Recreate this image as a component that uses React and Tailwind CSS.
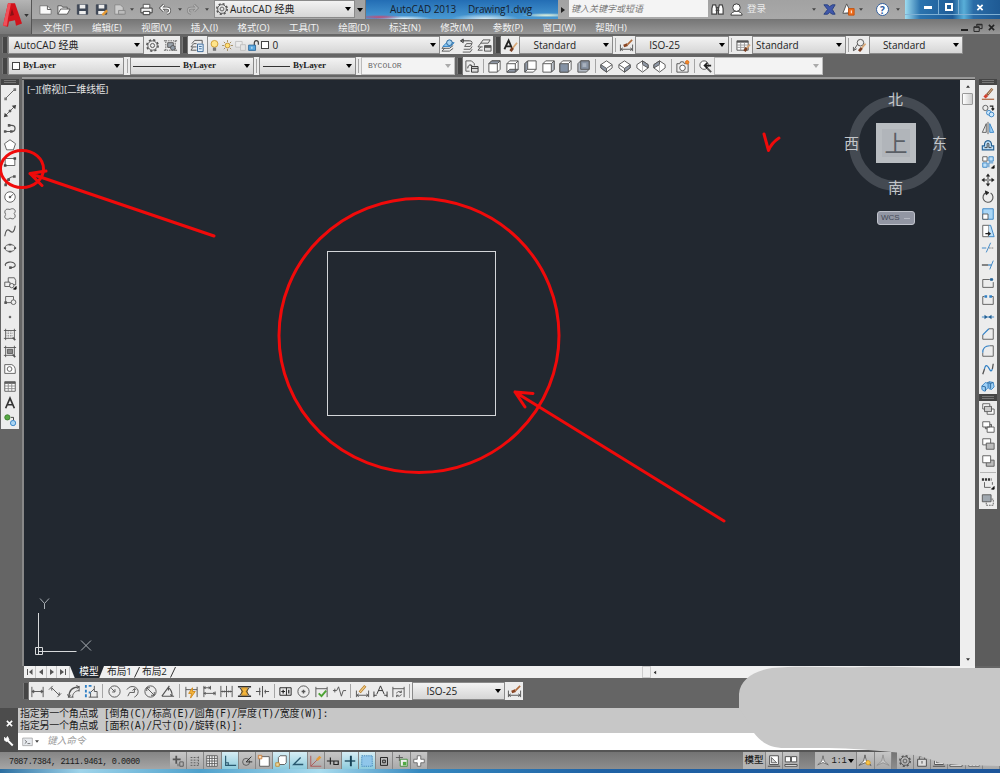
// src/App.jsx
import clsx from "clsx";

const BLUE = "#2f7fc4";

// every glyph is drawn on a 16x16 grid
const icons = {
  blank: null,
  file: <><path d="M2 4h8l4 4v5H2z" fill="#fafafa" stroke="#777" /><path d="M10 4v4h4" /></>,
  open: <><path d="M2 13V4h4l1 1.500h5V8" fill="#eee" /><path d="M2 13l3-5.500h10L12 13z" fill="#fff" /></>,
  save: <><path d="M2.500 3h11v10h-11z" fill="#3f4856" stroke="#3f4856" /><path d="M5 3h6v4H5zM4.500 9.500h7V13h-7z" fill="#eee" stroke="none" /></>,
  saveAs: <><path d="M2.500 3h11v10h-11z" fill="#3f4856" stroke="#3f4856" /><path d="M5 3h6v4H5zM4.500 9.500h7V13h-7z" fill="#eee" stroke="none" /><path d="M9 14l5-5" stroke="#e59a35" strokeWidth="2.500" /></>,
  plotPage: <><path d="M3 3h6l3 3v7H3z" fill="#ccc" stroke="#888" /><path d="M7 9h7v4H7z" fill="#bbb" stroke="#888" /></>,
  print: <><path d="M4.500 7V2.500h7V7" fill="#fff" /><path d="M2 6.500h12v5H2z" fill="#f2f2f2" stroke="#333" /><path d="M4.500 10h7v3.500h-7z" fill="#fff" stroke="#333" /></>,
  undo: <><path d="M3 6.500h6.500c4 0 4 5 0 5.500M6.500 3L3 6.500 6.500 10" stroke="#555" strokeWidth="3" /><path d="M3 6.500h6.500c4 0 4 5 0 5.500M6.500 3L3 6.500 6.500 10" stroke="#fff" strokeWidth="1.300" /></>,
  redo: <><path d="M13 6.500H6.500c-4 0-4 5 0 5.500M9.500 3L13 6.500 9.500 10" stroke="#858585" strokeWidth="3" /><path d="M13 6.500H6.500c-4 0-4 5 0 5.500M9.500 3L13 6.500 9.500 10" stroke="#b5b5b5" strokeWidth="1.300" /></>,
  gear: <><circle cx="8" cy="8" r="6" strokeWidth="1.700" strokeDasharray="2.400 2.310" /><circle cx="8" cy="8" r="5" /><circle cx="8" cy="8" r="2.200" /></>,
  wsSettings: <><path d="M3 3h10v10H3z" strokeDasharray="1.500 1" /><path d="M5 5h6v5H5z" fill="#9ba4ad" /><circle cx="10.500" cy="10.500" r="2.500" fill="#8f9aa5" /><path d="M1 3h2M13 3h2M1 13h2M13 13h2" /></>,
  layerProps: <><path d="M1 13h6M1 9.500h6M2 6l3-3.500h8V6M1 13l2-3M1 9.500L4 6h3" /><path d="M8 6.500h6v8H8z" fill="#dfeefb" stroke="#3a6896" /><path d="M9.500 9h3M9.500 11.500h3" stroke="#3a6896" /></>,
  bulb: <><circle cx="8" cy="6" r="4.200" fill="#ffe58a" stroke="#c79124" /><path d="M6 10.500h4v4H6z" fill="#777" stroke="none" /></>,
  sun: <><circle cx="8" cy="8" r="3" fill="#ffdf72" stroke="#b8842b" /><path d="M8 1.500v2M8 12.500v2M1.500 8h2M12.500 8h2M3.500 3.500l1.300 1.300M11.200 11.200l1.300 1.300M3.500 12.500l1.300-1.300M11.200 4.800l1.300-1.300" stroke="#8a6a2b" /></>,
  vpFreeze: <><path d="M2 3h8v7H2z" fill="#ececec" stroke="#bbb" /><path d="M8 7h6v7H8z" stroke="#bbb" fill="#e4e4e4" /></>,
  unlock: <><path d="M9 8V4.500c0-3.500 5-3.500 5 0V7" stroke="#444" strokeWidth="1.500" /><path d="M2 7.500h8.500v6.500H2z" fill="#58a7df" stroke="#235f92" /><path d="M6 9.500v2.500" stroke="#fff" /></>,
  layerMatch: <><path d="M1 14h8l4-3M1 11h8l4-3M1 14l3-3M1 11l3-3" stroke="#555" /><path d="M2 9l4-4h8l-4 4z" fill="#8cc7ef" stroke={BLUE} /><circle cx="9" cy="5" r="3" stroke="#235f92" fill="#a9d4f3" /></>,
  layerPrev: <><path d="M6 9l2-3h6l-2 3zM5 12h7l2-3M4 15h8l2-3" /><path d="M2 3h9c2 0 3 1 3 2M4.500 1v4L1.500 3z" stroke="#333" fill="none" /></>,
  layerState: <><path d="M1 13h5M1 9.500h5M4 5.500l2.500-3.500H14l-2 3.500zM1 9.500L4 5.500M1 13l3-3.500" /><path d="M8 8h7v6H8z" fill="#ddd" /><path d="M8 9.500h7" strokeWidth="2" /></>,
  textStyle: <><path d="M1.500 12L6 2.500l4 9.500M3.500 9h5" stroke="#222" strokeWidth="1.900" /><path d="M8 14l2.500-3.500" stroke="#7b3f22" strokeWidth="3" /><path d="M10.500 10.500L15 5" stroke="#d9a878" strokeWidth="1.800" /></>,
  dimStyle: <><path d="M1.500 7v7M14.500 7v7M2 12h12M4 10.500L2 12l2 1.500M12 10.500l2 1.500-2 1.500" /><path d="M5 8.500l4-1.500" stroke="#8a4624" strokeWidth="3" /><path d="M9 7l5-5" stroke="#b06b3b" strokeWidth="1.800" /></>,
  tableStyle: <><path d="M1 3h12v10H1z" fill="#fff" /><path d="M1 4h12" strokeWidth="2" /><path d="M1 7.500h12M1 10h12M5 5v8M9 5v8" stroke="#999" /><path d="M9 14l2.500-3.500" stroke="#7b3f22" strokeWidth="3" /><path d="M11.500 10.500L15 7" stroke="#d9a878" strokeWidth="1.800" /></>,
  leaderStyle: <><path d="M1.500 13.500L6 6.500M1.500 13.500v-4M1.500 13.500l3.500-2" /><circle cx="9" cy="5" r="3.500" /><path d="M7.500 14l3-3.500" stroke="#7b3f22" strokeWidth="3" /><path d="M10.500 10.500L14.500 6" stroke="#d9a878" strokeWidth="1.800" /></>,
  namedViews: <><path d="M2 13V2h6l3 3v2M2 13h4" /><path d="M4 10c0-4 4-5 5-2M7 6.500L9 8.500" stroke="#333" /><path d="M8 8h7v6H8z" fill="#ddd" stroke="#333" /><path d="M8 10h7" stroke="#333" /></>,
  cubeTop: <><path d="M2 5l3-3h9v9l-3 3H2z" fill="#fff" /><path d="M2 5l3-3h9l-3 3z" fill="#8f98a6" /><path d="M11 5v9" /></>,
  cubeBottom: <><path d="M2 5l3-3h9v9l-3 3H2z" fill="#fff" /><path d="M2 14l3-3h9l-3 3z" fill="#8f98a6" /><path d="M2 5h9v9M11 5l3-3" /></>,
  cubeLeft: <><path d="M2 5l3-3h9v9l-3 3H2z" fill="#fff" /><path d="M2 5l3-3v9l-3 3z" fill="#8f98a6" /><path d="M5 11h9" /></>,
  cubeRight: <><path d="M2 5l3-3h9v9l-3 3H2z" fill="#fff" /><path d="M11 5l3-3v9l-3 3z" fill="#bcc3cc" /><path d="M2 5h9" /></>,
  cubeFront: <><path d="M2 5l3-3h9v9l-3 3H2z" fill="#fff" /><path d="M2 5h9v9H2z" fill="#8492a5" /><path d="M11 5l3-3" /></>,
  cubeBack: <><path d="M2 5l3-3h9v9l-3 3H2z" fill="#b3bac4" /><path d="M5 2h9v9H5z" fill="#8792a2" /><path d="M7 4.500h4v4H7z" fill="#a9b2be" stroke="none" /></>,
  isoSW: <><path d="M8 2l6 4v3.500L8 14 2 9.500V6z" fill="#fff" /><path d="M2 6l6 4v4L2 9.500z" fill="#8f98a6" /><path d="M8 10l6-4" /></>,
  isoSE: <><path d="M8 2l6 4v3.500L8 14 2 9.500V6z" fill="#fff" /><path d="M14 6l-6 4v4l6-4.500z" fill="#8f98a6" /><path d="M8 10L2 6" /></>,
  isoNE: <><path d="M8 2l6 4v3.500L8 14 2 9.500V6z" fill="#fff" /><path d="M8 2l6 4v3.500L8 6z" fill="#8f98a6" /><path d="M8 6v8" stroke="#bbb" /></>,
  isoNW: <><path d="M8 2l6 4v3.500L8 14 2 9.500V6z" fill="#fff" /><path d="M8 2L2 6v3.500L8 6z" fill="#8f98a6" /><path d="M8 6v8" stroke="#bbb" /></>,
  camera: <><path d="M2 5h3l1-2h3l1 2h4v9H2z" fill="#eee" /><circle cx="8" cy="9.500" r="3" fill="#fff" /><circle cx="13" cy="3.500" r="1.800" fill="#f28a2c" stroke="#e0701a" /></>,
  zoomPrev: <><circle cx="6.500" cy="6.500" r="4.500" fill="#fff" /><path d="M10 10l4 4" strokeWidth="2" /><path d="M14 7H7M10 4L7 7l3 3" stroke="#222" strokeWidth="1.800" /></>,

  line: <><path d="M3 13L13 3" /><path d="M1.500 12h3v3h-3zM12 1.500h3v3h-3z" fill="#777" stroke="none" /></>,
  xline: <><path d="M2 14L14 2" /><path d="M1 15l1-5 4 4zM15 1l-1 5-4-4z" fill="#444" stroke="none" /><circle cx="8" cy="8" r="1.200" fill="#444" /></>,
  pline: <><path d="M2 12h8c5 0 5-7 0-7H7" strokeWidth="1.400" /><path d="M1 10.500h3v3H1zM8 10.500h3v3H8zM5.500 3.500h3v3h-3z" fill="#555" stroke="none" /></>,
  polygon: <path d="M8 2l6.300 4.500-2.400 7H4.100l-2.400-7z" fill="#fff" />,
  rect: <><path d="M2.500 4h11v8h-11z" fill="#fff" /><path d="M1 10.500h3v3H1zM12 2.500h3v3h-3z" fill="#444" stroke="none" /></>,
  arc: <><path d="M3 14C3 8 8 4 13 4" strokeWidth="1.400" /><path d="M1.500 12h3v3h-3zM11.500 2.500h3v3h-3zM5 6h3v3H5z" fill="#555" stroke="none" /></>,
  circle: <><circle cx="8" cy="8" r="6" fill="#fff" /><path d="M8 8l4-3.500" /><circle cx="8" cy="8" r="1" fill="#333" /></>,
  cloud: <path d="M8 3c2-2 6-1 6 2 0 1-1 2-1.500 2.500C15 9 14 14 10.500 13.500c-1 0-2-.5-2.500-1-2 2.500-6 1.500-6-1.500 0-1 .5-2 1.500-2.500C1 7 2 2 5.500 2.500c1 0 2 0 2.500.5z" />,
  spline: <path d="M2 14C3 7 5 5 8 8s5 1 6-6" strokeWidth="1.300" />,
  ellipse: <><ellipse cx="8" cy="8" rx="6" ry="4" /><path d="M6.500 4h3M6.500 12h3M1 8h2.500M12.500 8H15" strokeWidth="2" /></>,
  ellArc: <><path d="M3 9c-3-4 10-7 11-1 0 3-3 3-6 3" strokeWidth="1.300" /><path d="M7 9.500h3v3H7z" fill="#555" stroke="none" /></>,
  insert: <><path d="M6 7V2h7l1.500 3v5H10M2 7h6v5H2z" fill="#eee" /><circle cx="10" cy="11" r="2.500" fill="#eee" /><path d="M12 15h3v-3z" fill="#111" stroke="#111" /></>,
  block: <><path d="M3 4h9v7H3z" /><path d="M1.500 9.500h3v3h-3z" fill="#555" stroke="none" /><circle cx="12" cy="10.500" r="2.700" fill="#eee" /></>,
  point: <circle cx="8" cy="8" r="1" fill="#555" />,
  hatch: <><path d="M1 4h14M1 13h12M3 2v13M13 2v12" /><path d="M4 7h8M4 10h8M6 5v7M9 5v7" strokeDasharray="1 1" stroke="#888" /><path d="M11 12l3 3" strokeWidth="2" /></>,
  gradient: <><path d="M1 4h14M1 13h12M3 2v13M13 2v12" /><path d="M5 6h6v5H5z" fill="#888" /><path d="M11 12l3 3" strokeWidth="2" /></>,
  region: <><path d="M2 3h8c3 1 4 4 4 6v4H2z" fill="#fff" /><circle cx="7.500" cy="8" r="2.700" /></>,
  table: <><path d="M2 3h12v11H2z" fill="#fff" /><path d="M2 4.500h12" strokeWidth="2" /><path d="M2 8h12M2 11h12M6 5v9M10 5v9" stroke="#888" /></>,
  mtext: <path d="M3 14L8 2.500 13 14M5 10h6" stroke="#333" strokeWidth="1.900" />,
  addSel: <><circle cx="5" cy="5" r="3" fill="#57a844" stroke="#3b7f2e" /><circle cx="11.500" cy="11.500" r="3" fill="#a9d4f3" stroke={BLUE} /><path d="M9 5h3v3" stroke="#333" /></>,

  erase: <><path d="M1 14h14" stroke="#a65a32" strokeWidth="1.300" /><path d="M4 12l3-3" stroke="#d5402e" strokeWidth="3.500" /><path d="M7 9l6-7" stroke="#8a5a3b" strokeWidth="3" /><path d="M8 8l5-6" stroke="#e6cfa8" strokeWidth="1" /></>,
  copy: <><circle cx="5" cy="4.500" r="3" /><path d="M10 2.500h3.500V6M12 5l1.500 2L15 5" stroke="#222" strokeWidth="1.300" /><circle cx="9" cy="10" r="2.700" fill="#cfe7fa" stroke={BLUE} /><circle cx="12" cy="12" r="2.700" fill="#cfe7fa" stroke={BLUE} /></>,
  mirror: <><path d="M6 3v10H1.500zM8 1v14" /><path d="M10 3v10h4.500z" fill="#9fd0f5" stroke={BLUE} /></>,
  offset: <><path d="M1.500 13.500V9H4C3 1 13 1 12 9h2.500v4.500z" stroke="#235f92" strokeWidth="1.300" fill="#bfe0f8" /><path d="M4 11h3V7c0-1.500 2-1.500 2 0v4h3" stroke="#333" /></>,
  array: <><path d="M2 2h5v5H2z" fill="#fff" /><path d="M9 2h5v5H9zM2 9h5v5H2z" fill="#bfe0f8" stroke={BLUE} /><path d="M9 14V9h5" stroke={BLUE} /><path d="M12 15h3v-3z" fill="#111" stroke="#111" /></>,
  move: <><path d="M8 3v3M8 10v3M3 8h3M10 8h3" stroke="#222" /><circle cx="8" cy="8" r="1.500" /><path d="M8 .5L5.500 4h5zM8 15.500L5.500 12h5zM.5 8L4 5.500v5zM15.500 8L12 5.500v5z" fill="#222" stroke="none" /></>,
  rotate: <><path d="M6 3a5.700 5.700 0 1 0 5 .500" strokeWidth="1.300" /><path d="M5 1l4 2-3 2.500z" fill="#222" stroke="#222" /></>,
  scale: <><path d="M2 2h12v12H2z" fill="#a9d6f7" stroke={BLUE} /><path d="M2 8h6v6H2z" fill="#fff" /></>,
  stretch: <><path d="M2 1.500h7v13H2z" fill="#fff" /><path d="M9 1.500h2l4 13h-6" fill="#bfe0f8" stroke={BLUE} /><path d="M5 11h5M8 9l2.500 2L8 13" stroke="#222" strokeWidth="1.300" /></>,
  trim: <><path d="M1 8h5" stroke={BLUE} /><path d="M9 8h6" stroke="#777" strokeDasharray="2 1" /><path d="M6 13l5-11" stroke={BLUE} /></>,
  extend: <><path d="M1 8h7" stroke="#333" strokeWidth="1.300" /><path d="M8 8h4" stroke={BLUE} strokeWidth="1.300" /><path d="M10 13l4-10" stroke={BLUE} /></>,
  breakPt: <><path d="M10 4H2v9h12V7" /><path d="M10 4h4" stroke={BLUE} /><path d="M10.500 2.500h3v3h-3z" fill="#235f92" stroke="none" /></>,
  breakTwo: <><path d="M4 4H2v9h12V4h-2" /><path d="M4 2.500h3v3H4zM9.500 2.500h3v3h-3z" fill={BLUE} stroke="none" /></>,
  join: <><path d="M1 8h14" stroke={BLUE} /><path d="M7.500 8L4 5.500v5zM8.500 8L12 5.500v5z" fill="#235f92" stroke="none" /></>,
  chamfer: <><path d="M9 2h5v12H2V9" /><path d="M2 9l7-7" stroke={BLUE} strokeWidth="1.300" /></>,
  fillet: <><path d="M10 2h4v12H2v-4" /><path d="M2 10c0-5 3-8 8-8" stroke={BLUE} strokeWidth="1.300" /></>,
  blend: <><path d="M2 14l2-6M13 8l1-6" strokeWidth="1.500" /><path d="M4 8c1-5 3-5 5-1s3 4 4 1" stroke={BLUE} strokeWidth="1.300" /></>,
  explode: <><path d="M1 8l4-4 3 1v5l-4 4-3-2zM9 3l5 1 1 5-3 3-3-1z" fill="#9fd0f5" stroke={BLUE} /><path d="M1 8l4 1v5M7 4l4 1v6M11 5l3-1" stroke="#235f92" /></>,
  front: <><path d="M2 2h8v6H2zM7 8h8v6H7z" fill="#fff" /><path d="M4 5h8v6H4z" fill="#ccc" /></>,
  back: <><path d="M5 5h7v5H5z" fill="#bbb" /><path d="M2 2h8v6H2zM7 8h8v6H7z" fill="#fff" /></>,
  above: <><path d="M2 2h9v7H2z" fill="#fff" /><path d="M6 7h9v7H6z" fill="#bbb" /></>,
  under: <><path d="M6 7h9v7H6z" fill="#bbb" /><path d="M2 2h9v8H2z" fill="#fff" /></>,
  annFront: <><path d="M4 7v6h7M13 7v3" /><path d="M1 4h11" stroke="#333" strokeWidth="3" strokeDasharray="2.500 1" /><path d="M12 15h3v-3z" fill="#111" stroke="#111" /></>,
  hatchBack: <><path d="M6 7h8v7H6z" fill="#eee" strokeDasharray="2 1" /><path d="M1.500 2h10v8h-10z" fill="#a0a8b0" /></>,

  dimLin: <path d="M2 3v11M14 3v11M2 8h12M4 6.500L2 8l2 1.500zM12 6.500L14 8l-2 1.500z" />,
  dimAli: <path d="M1 6l4-4M10 14l4-4M4 4l8 8M4 4v3M12 12V9" />,
  dimArc: <><path d="M3 14C3 7 7 3 14 3" strokeWidth="1.300" /><path d="M7 14c0-4 3-7 7-7M2 14h6M14 2v6M1.500 11L3 14l2-2.500M11 1.500L14 3l-2.500 2" /></>,
  dimOrd: <><path d="M7 14V9l4-4v3h3v6M5 14h10M11 2v3" /><path d="M2 1v3M2 6v3M2 11v3M5 2h3M5 9h2" stroke={BLUE} strokeWidth="2" /></>,
  dimRad: <><circle cx="8" cy="8" r="6" /><path d="M8 8L4.500 4.500M8.500 5.500V8.500H5.500" /></>,
  dimJog: <path d="M2 6c4-6 12-3 12 2 0 3-2 5-4 6M10 5v4H5l-2 4M10 5L8 7M10 5l2 1" />,
  dimDia: <><circle cx="8" cy="8" r="6" /><path d="M4 4l8 8M4 4v3.500M4 4h3.500M12 12V8.500M12 12H8.500" /></>,
  dimAng: <path d="M2 13h13M2 13L10 2M9 4c3 2 4 5 4 9M9 4v3M13 13l-2-2" strokeWidth="1.200" />,
  dimQuick: <><path d="M2 3v11M14 3v11M2 6h12" /><path d="M9 4L5 10h3l-1 5 5-7H9z" fill="#f4b53a" stroke="#d08a1e" /></>,
  dimBase: <path d="M2 2v12M2 4h7M9 2v4M2 10h12M14 8v4M4 3L2 4l2 1M4 9l-2 1 2 1M7 3l2 1-2 1M12 9l2 1-2 1" />,
  dimCont: <path d="M2 2v12M8 2v12M14 2v12M2 8h12M4 7v2M6 7v2M10 7v2M12 7v2" />,
  dimSpace: <><path d="M1 3h14M1 13h14" stroke="#333" strokeWidth="1.500" /><path d="M5 4h6v8H5z" fill="#f4b53a" stroke="#b8842b" /><path d="M3 4l3 4-3 4M13 4l-3 4 3 4" stroke="#333" /></>,
  dimBreak: <path d="M1 8h5M10 8h5M8 2v12M5 4v8M11 6v4" strokeWidth="1.100" />,
  tolerance: <><path d="M2 4h12v8H2zM9 4v8" stroke="#222" /><path d="M3.500 8h4M5.500 6v4M11.500 6v4" stroke="#222" strokeWidth="1.300" /></>,
  center: <><circle cx="8" cy="8" r="6" /><path d="M8 6v4M6 8h4" strokeWidth="1.500" /></>,
  inspect: <><path d="M2 3v11M14 3v11M2 5h12" /><path d="M5 10l3 3 5-6" stroke="#4ba332" strokeWidth="2" /></>,
  jogLin: <path d="M1 7h4l2-4 3 10 2-6h3M3 5v4" />,
  dimEdit: <><path d="M1.500 7v7M14.500 7v7M2 12h12M4 10.500L2 12l2 1.500M12 10.500l2 1.500-2 1.500" /><path d="M5 9l6-7" stroke="#b8802f" strokeWidth="3" /><path d="M5.500 8.500l5-6" stroke="#f6d28a" strokeWidth="1.200" /></>,
  dimText: <path d="M1 8v6M15 8v6M1 12h3M12 12h3M4 11l4-9 4 9M6 7h4" stroke="#333" />,
  dimUpd: <><path d="M2 3v11M14 3v11M2 5h12" /><path d="M6 10c1-3 4-2 5-1M11 7v2H9M11 11c-1 3-4 2-5 1M6 14v-2h2" /></>,

  infer: <><path d="M6 2v9M2 6h9" strokeWidth="2" /><path d="M10 9h4v5h-4zM8 14v-3" /></>,
  snap: <path d="M3 4h8M3 7h8M3 10h8M12 3v10M3 13h10" strokeDasharray="2 1.500" />,
  grid: <><path d="M2 2h12v12H2z" fill="#fff" /><path d="M2 5h12M2 8h12M2 11h12M5 2v12M8 2v12M11 2v12" /></>,
  ortho: <path d="M3 2v11h12M3 10h3v3" stroke="#28586f" strokeWidth="1.300" />,
  polar: <><circle cx="7" cy="9" r="4" /><path d="M7 9l6-6M7 9h7" stroke="#222" /></>,
  osnap: <><path d="M3 3h11v11H3z" fill="#fff" /><path d="M1.500 1.500h4v4h-4z" fill="#f6d9b5" stroke="#c97b3b" /></>,
  osnap3d: <><path d="M5 4l2-2h7v8l-2 2H5z" fill="#fff" /><path d="M2 10h4v4H2z" stroke="#c28a2b" fill="#e8d9a5" /></>,
  otrack: <path d="M14 12H3l8-8" stroke="#28586f" strokeWidth="1.500" />,
  ducs: <><path d="M2 2v12h12M2 14l7-7" stroke="#a55" /><path d="M9 7l4-4" stroke="#e59a35" strokeWidth="3" /></>,
  dyn: <path d="M5 4v8M1 8h8M9 8h5v4H9z" stroke="#222" strokeWidth="1.300" />,
  lwt: <><path d="M9 2v12" stroke="#164257" strokeWidth="2.200" /><path d="M2 8h12" stroke="#164257" strokeWidth="1.500" /></>,
  tpy: <path d="M2 2h12v12H2z" fill="#8fc6ea" stroke="#3b82b8" strokeDasharray="1.500 1" />,
  qp: <path d="M4 4h8v9H4zM6.500 7h3v3h-3z" stroke="#222" strokeWidth="1.100" />,
  sc: <><path d="M5 1v7M1 4h8" /><path d="M6 6h8v8H6z" fill="#eee" stroke="#3b8a35" /><path d="M9 9h4v4H9z" fill="#4faa43" stroke="none" /></>,
  am: <path d="M6 2h4v4h4v4h-4v4H6v-4H2V6h4z" fill="#fff" stroke="#666" />,
  anno: <path d="M8 1l1.500 7 5.500 5-7-3-7 3 5.500-5z" fill="#fff" stroke="#555" />,
  annoSun: <><path d="M8 1l1.500 7 5.500 5-7-3-7 3 5.500-5z" fill="#fff" /><circle cx="11.500" cy="10" r="2.500" fill="#f7c54b" stroke="#d99a25" /></>,
  annoOff: <path d="M8 1l1.500 7 5.500 5-7-3-7 3 5.500-5z" fill="#c9c9c9" stroke="#909090" />,
  layout: <><path d="M3 2h10v10H3zM1 14h14" fill="#fff" stroke="#444" /><path d="M5 4l6 6H5z" fill="#ddd" /></>,
  qview: <path d="M1.500 3h6v6h-6zM8.500 3h6v6h-6zM1 12h14v2H1z" fill="#fff" stroke="#444" />,
  lock: <><path d="M5 6V3h6v3" /><path d="M3 6h10v8H3zM8 8v3" fill="#ddd" stroke="#444" /></>,
  binoc: <path d="M3 3h3l1 4v6H2V7zM10 3h3l1 4v6H9V7zM6 6h4M6 9h4" fill="#fff" stroke="#444" strokeWidth="1.300" />,
  user: <><path d="M2 14c0-3 3-3 4-4h4c1 1 4 1 4 4z" fill="#fff" stroke="#333" /><circle cx="8" cy="6" r="4" fill="#fff" stroke="#333" /></>,
  exchange: <path d="M2 3l4 5-4 5h4l2-2 3 2h3l-3-5 3-5h-3L8 5 6 3z" fill="#4057aa" stroke="#28407f" />,
  share: <><path d="M2 12L6 2l4 8M2 12h6" fill="#fff" /><path d="M8 7h6v7H8z" fill="#ee6c1c" stroke="#c35310" /><path d="M11 9v3" stroke="#fff" /></>,
  mdiRestore: <path d="M6 5V2h8.500v7H11M1.500 6H10v7.500H1.500zM6 3h8M2 7h8" stroke="#222" strokeWidth="1.500" />,
  wrench: <><path d="M13 14L6 7" stroke="#fff" strokeWidth="2.500" /><path d="M2 3v4l3 2 3-3-2-4-2 3z" fill="#fff" stroke="#fff" /></>,
  prompt: <><path d="M1 3h14v11H1z" fill="#e8ebef" stroke="#999" /><path d="M4 6l3 2.500L4 11M8 11h4" stroke="#444" /></>,
};

function Icon({ name, className = "h-4 w-4" }) {
  return (
    <svg viewBox="0 0 16 16" fill="none" stroke="#555" strokeWidth="1" className={clsx("shrink-0", className)}>
      {icons[name]}
    </svg>
  );
}

function Slot({ name, w = "w-[17.8px]" }) {
  return (
    <div className={clsx("flex shrink-0 items-center justify-center", w)}>
      <Icon name={name} className="h-[15px] w-[15px]" />
    </div>
  );
}

function Caret({ className = "text-black" }) {
  return (
    <svg viewBox="0 0 6 4" className={clsx("h-1 w-1.5 shrink-0", className)}>
      <path d="M0 0h6L3 4z" fill="currentColor" />
    </svg>
  );
}

function Combo({ w, children, off }) {
  return (
    <div
      className={clsx(
        "flex h-full shrink-0 items-center justify-between overflow-hidden border pr-[3px]",
        w,
        off ? "border-[#bbb] bg-[#f3f3f3]" : "border-[#8a8a8a] bg-linear-to-b from-[#f3f3f3] to-[#d6d6d6]",
      )}
    >
      <div className="flex items-center whitespace-nowrap">{children}</div>
      <Caret className={off ? "text-[#aaa]" : "text-black"} />
    </div>
  );
}

const Grip = () => <div className="my-px w-1.5 shrink-0 border-x border-[#777] bg-[#454545]" />;

const Sep = ({ w = "w-[6px]" }) => (
  <div className={clsx("flex shrink-0 justify-center bg-[#ececec] py-0.5", w)}>
    <div className="w-px bg-[#a5a5a5]" />
  </div>
);

const Dot = ({ className = "" }) => (
  <div className={clsx("flex w-1.5 shrink-0 items-center justify-center", className)}>
    <Caret className="h-[3px]! w-1! text-[#444]" />
  </div>
);

function TitleBar() {
  return (
    <div className="flex h-[19px] bg-linear-to-b from-[#a2a2a2] to-[#a9a9a9]">
      <div className="flex pl-1">
        {["file", "open", "save", "saveAs", "plotPage"].map((n) => (
          <Slot key={n} name={n} w="w-[18.6px]" />
        ))}
        <Dot />
        <div className="w-[3px]" />
        <Slot name="print" w="w-[18px]" />
        <Slot name="undo" w="w-[19px]" />
        <Dot className="ml-0.5" />
        <Slot name="redo" w="w-[19px]" />
        <Dot className="ml-0.5" />
      </div>
      <div className="ml-1 h-[18px]">
        <Combo w="w-[141px]">
          <Icon name="gear" className="h-3.5 w-3.5" />
          <span className="ml-px text-[10px]">AutoCAD 经典</span>
        </Combo>
      </div>
      <div className="flex w-[11px] items-center justify-center border-r border-[#777]"><Caret /></div>
      <div className="flex w-[192px] items-center bg-[radial-gradient(ellipse_at_7%_90%,#c54a72_0,#c54a7200_9%),radial-gradient(ellipse_at_20%_100%,#e9f6fb_0,#e9f6fb00_13%),radial-gradient(ellipse_at_62%_100%,#d9edf5_0,#d9edf500_20%),radial-gradient(ellipse_at_94%_80%,#e6f4dc_0,#e6f4dc00_10%),linear-gradient(#236db4,#4a9bd4)] pl-[24px] text-[10px] text-[#15202c]">
        <span className="w-[78px] whitespace-nowrap tracking-[-0.1px]">AutoCAD 2013</span>
        <span className="whitespace-nowrap tracking-[-0.2px]">Drawing1.dwg</span>
      </div>
      <div className="flex w-[11px] items-center justify-center"><Caret className="-rotate-90 text-[#222]" /></div>
      <div className="flex h-[17px] w-[139px] items-center bg-[#f4f4f4] pl-0.5 text-[9px] text-[#777] italic">键入关键字或短语</div>
      <Slot name="binoc" w="w-[19px]" />
      <Slot name="user" w="w-[19px]" />
      <div className="flex w-[65px] items-center pl-px text-[9.5px] text-[#ececec]">登录</div>
      <Dot />
      <div className="w-[3px]" />
      <Slot name="exchange" w="w-[19px]" />
      <Slot name="share" w="w-[19px]" />
      <Dot />
      <div className="flex flex-1 items-center justify-center pl-2">
        <div className="flex h-[13px] w-[13px] items-center justify-center rounded-full border border-[#345f9c] bg-white text-[10px] leading-none font-bold text-[#2b5c9f]">?</div>
        <Dot className="ml-1.5" />
      </div>
      <div className="flex w-[95px] bg-[linear-gradient(90deg,#9edcf0,#2b73ae_16%,#1f5c98_50%,#59afd8_62%,#2a6ca7_72%,#1e5a94)] text-white">
        <div className="flex h-[15px] w-[34px] items-center justify-center border-r border-b border-[#7fb0d4] pl-3"><div className="h-[3px] w-2 bg-white" /></div>
        <div className="flex h-[15px] w-[20px] items-center justify-center border-r border-b border-[#7fb0d4]"><div className="h-2 w-2 border-2 border-white" /></div>
        <div className="flex h-[15px] flex-1 items-center justify-center border-b border-[#7fb0d4]">
          <svg viewBox="0 0 8 8" className="h-[7px] w-2" stroke="#fff" strokeWidth="2"><path d="M1 1l6 6M7 1L1 7" /></svg>
        </div>
      </div>
    </div>
  );
}

const menus = ["文件(F)", "编辑(E)", "视图(V)", "插入(I)", "格式(O)", "工具(T)", "绘图(D)", "标注(N)", "修改(M)", "参数(P)", "窗口(W)", "帮助(H)"];

function MenuBar() {
  return (
    <div className="flex h-[15px] items-center gap-[19.4px] bg-linear-to-b from-[#757575] to-[#989898] pt-0.5 pl-[11px] text-[9.5px] leading-[13px] text-[#f3f3f3]">
      {menus.map((m) => (
        <div key={m} className="shrink-0 whitespace-nowrap">{m}</div>
      ))}
      <div className="ml-auto flex items-center gap-[5px] pr-[5px]">
        <div className="mt-1 h-0.5 w-[7px] bg-[#222]" />
        <Icon name="mdiRestore" className="h-2.5 w-2.5" />
        <svg viewBox="0 0 8 8" className="h-[7px] w-[7px]" stroke="#222" strokeWidth="1.800"><path d="M1 1l6 6M7 1L1 7" /></svg>
      </div>
    </div>
  );
}

function StandardRow() {
  return (
    <div className="flex h-[22px] bg-[#656565] py-0.5 pl-0.5 text-[10px] text-[#222]">
      <Grip />
      <Combo w="w-[136px]"><span className="pl-[5px]">AutoCAD 经典</span></Combo>
      <div className="flex bg-[#ececec]"><Slot name="gear" /><Slot name="wsSettings" /></div>
      <div className="w-[2px]" />
      <Grip />
      <div className="flex bg-[#ececec]"><Slot name="layerProps" w="w-[19px]" /></div>
      <Combo w="w-[233px]">
        {["bulb", "sun", "vpFreeze", "unlock"].map((n) => (
          <Icon key={n} name={n} className="h-[13px] w-[13px]" />
        ))}
        <div className="ml-px h-2 w-2 border border-[#444] bg-white" />
        <span className="ml-1">0</span>
      </Combo>
      <div className="flex bg-[#ececec]"><Slot name="layerMatch" /><Slot name="layerPrev" /><Slot name="layerState" /></div>
      <div className="w-0.5" />
      <Grip />
      <div className="flex bg-[#ececec]"><Slot name="textStyle" w="w-[18.5px]" /></div>
      <Combo w="w-[94px]"><span className="pl-[13px]">Standard</span></Combo>
      <Sep w="w-[4px]" />
      <div className="flex bg-[#ececec]"><Slot name="dimStyle" /></div>
      <Combo w="w-[94px]"><span className="pl-[13px]">ISO-25</span></Combo>
      <Sep w="w-[5px]" />
      <div className="flex bg-[#ececec]"><Slot name="tableStyle" /></div>
      <Combo w="w-[94px]"><span className="pl-[3px]">Standard</span></Combo>
      <Sep w="w-[5px]" />
      <div className="flex bg-[#ececec]"><Slot name="leaderStyle" /></div>
      <Combo w="w-[94px]"><span className="pl-[13px]">Standard</span></Combo>
    </div>
  );
}

function PropertiesRow() {
  return (
    <div className="flex h-[21px] bg-[#656565] pt-px pb-0.5 pl-0.5 font-['Liberation_Serif','Noto_Sans_CJK_SC',serif] text-[9px] font-bold text-[#222]">
      <Grip />
      <Combo w="w-[116px]">
        <div className="ml-[3px] h-2 w-2 border border-[#444] bg-white" />
        <span className="ml-[3px] tracking-[-0.1px]">ByLayer</span>
      </Combo>
      <Sep />
      <Combo w="w-[124px]">
        <div className="ml-0.5 h-px w-[47px] bg-[#333]" />
        <span className="ml-[3px] tracking-[-0.1px]">ByLayer</span>
      </Combo>
      <Sep w="w-[5px]" />
      <Combo w="w-[97px]">
        <div className="ml-[3px] h-px w-[27px] bg-[#333]" />
        <span className="ml-[3px] tracking-[-0.1px]">ByLayer</span>
      </Combo>
      <Sep w="w-[5px]" />
      <Combo w="w-[94px]" off>
        <span className="pl-1.5 font-['Liberation_Mono',monospace] text-[8px] font-normal text-[#666]">BYCOLOR</span>
      </Combo>
      <div className="w-0.5" />
      <Grip />
      <div className="flex bg-[#ececec]">
        <Slot name="namedViews" />
        <Sep w="w-[5px]" />
        {["cubeTop", "cubeBottom", "cubeLeft", "cubeRight", "cubeFront", "cubeBack"].map((n) => (
          <Slot key={n} name={n} />
        ))}
        <Sep w="w-[5px]" />
        {["isoSW", "isoSE", "isoNE", "isoNW"].map((n) => (
          <Slot key={n} name={n} />
        ))}
        <Sep w="w-[5px]" />
        <Slot name="camera" />
        <Sep w="w-[5px]" />
        <Slot name="zoomPrev" />
      </div>
      <Combo w="w-[109px]" off />
    </div>
  );
}

function VerticalBar({ items }) {
  return (
    <div className="flex w-[18px] flex-col bg-[#ececec]">
      <div className="flex h-[6.500px] flex-col justify-center gap-px bg-[#454545] px-[3px]">
        <div className="h-px bg-[#777]" />
        <div className="h-px bg-[#777]" />
      </div>
      {items.map((n) =>
        n === "|" ? (
          <div key={n} className="mx-px my-[2px] h-px bg-[#b5b5b5]" />
        ) : (
          <div key={n} className="flex h-[17.2px] items-center justify-center">
            <Icon name={n} className="h-[14px] w-[14px]" />
          </div>
        ),
      )}
    </div>
  );
}

const drawTools = ["line", "xline", "pline", "polygon", "rect", "arc", "circle", "cloud", "spline", "ellipse", "ellArc", "insert", "block", "point", "hatch", "gradient", "region", "table", "mtext", "addSel"];
const modifyTools = ["erase", "copy", "mirror", "offset", "array", "move", "rotate", "scale", "stretch", "trim", "extend", "breakPt", "breakTwo", "join", "chamfer", "fillet", "blend", "explode"];
const orderTools = ["front", "back", "above", "under", "|", "annFront", "hatchBack"];

// view cube, UCS icon and the drawn rectangle sit freely on the model space
function Canvas() {
  return (
    <div className="relative flex-1 overflow-hidden bg-[#222830] text-[#c3c6ca]">
      <div className="absolute top-[3px] left-[3px] text-[9.7px] leading-[13px] tracking-[-0.1px] text-[#e5e5e5]">[−][俯视][二维线框]</div>
      <div className="absolute top-[171px] left-[303px] h-[165px] w-[169px] border border-[#d4d6d9]" />

      <div className="absolute top-[16px] left-[825px] h-[95px] w-[95px] rounded-full border-[10px] border-[#444a52]" />
      <div className="absolute top-[43px] left-[852px] flex h-[40px] w-[40px] items-center justify-center bg-[#b9bdc1]">
        <div className="flex h-[28px] w-[28px] items-center justify-center bg-[#b1b5ba] text-[23px] leading-none text-[#5a5f66]">上</div>
      </div>
      <span className="absolute top-[11px] left-[864px] text-[15px] leading-[16px]">北</span>
      <span className="absolute top-[99px] left-[864px] text-[15px] leading-[16px]">南</span>
      <span className="absolute top-[55px] left-[820px] text-[15px] leading-[16px]">西</span>
      <span className="absolute top-[55px] left-[908px] text-[15px] leading-[16px]">东</span>
      <div className="absolute top-[131px] left-[853px] flex h-[14px] w-[38px] items-center gap-1 rounded-[3px] border border-[#c0c3cc] bg-[#9296a3] pl-[3px] font-['Liberation_Sans',sans-serif] text-[8px] text-[#444a58]">
        WCS<span className="h-px w-1.5 bg-[#b5b8c2]" />
      </div>

      <svg viewBox="0 0 70 60" fill="none" stroke="#d6d8da" strokeWidth="1" className="absolute top-[516px] left-[10px] h-[60px] w-[70px]">
        <path d="M4.500 17v42M1.500 51.500h7v7h-7zM4.500 55.500h38" />
        <path d="M6 2.500l4.500 5 4.500-5M10.500 7.500V13M47 44.500l10 10M57 44.500l-10 10" stroke="#aab0b5" />
      </svg>
    </div>
  );
}

function ScrollBar() {
  return (
    <div className="flex w-[15px] flex-col items-center justify-between bg-[#eeeeee]">
      <div className="flex w-full flex-col items-center">
        <div className="flex h-[13px] items-center"><Caret className="h-[3px]! w-1! rotate-180 text-[#333]" /></div>
        <div className="h-[12px] w-[11px] rounded-[1px] border border-[#999] bg-linear-to-r from-white to-[#ccc]" />
      </div>
      <div className="flex h-[14px] items-center"><Caret className="h-[3px]! w-1! text-[#333]" /></div>
    </div>
  );
}

const TabEdge = ({ className }) => (
  <svg viewBox="0 0 6 12" className={clsx("h-3 w-1.5 shrink-0", className)} stroke="#333" strokeWidth="1">
    <path d="M5.500 1L.5 11.500" />
  </svg>
);

function SheetTabs() {
  return (
    <div className="ml-[24px] flex h-[12px] w-[951px] bg-[#f0f0f0] text-[9.7px] leading-[12px] text-[#222]">
      <svg viewBox="0 0 46 12" className="h-3 w-[46px] shrink-0" fill="#555" stroke="#999" strokeWidth=".5">
        <path d="M11.500 0v12M22.500 0v12M32.500 0v12M45.500 0v12" />
        <path d="M4 3v6h-1V3zM8.500 3v6L5 6zM19 3v6l-4-3zM26 3v6l4-3zM36 3v6l4-3zM41 3v6h1V3z" stroke="none" />
      </svg>
      <div className="flex w-[34px] shrink-0 justify-center bg-[#222830] pl-1 text-white [clip-path:polygon(0_0,100%_0,86%_100%,14%_100%)]">模型</div>
      <span className="w-[29px] pl-[3px] whitespace-nowrap">布局1</span>
      <TabEdge className="ml-px" />
      <span className="ml-[2px] w-[28px] whitespace-nowrap">布局2</span>
      <TabEdge />
      <div className="ml-[466px] flex w-[9px] items-center border border-[#ccc]" />
      <div className="flex items-center pl-0.5"><Caret className="h-[3px]! w-1! rotate-90 text-[#333]" /></div>
    </div>
  );
}

const dimGroups = [
  ["dimLin", "dimAli", "dimArc", "dimOrd"],
  ["dimRad", "dimJog", "dimDia", "dimAng"],
  ["dimQuick", "dimBase", "dimCont", "dimSpace", "dimBreak"],
  ["tolerance", "center", "inspect", "jogLin"],
  ["dimEdit", "dimText", "dimUpd"],
];

function DimensionBar() {
  return (
    <div className="flex h-[30px] bg-[#656565] pt-1 pb-2 pl-[23px]">
      <Grip />
      <div className="flex h-[18px] bg-[#ececec] text-[10px] text-[#222]">
        {dimGroups.map((g) => (
          <div key={g[0]} className="flex">
            {g.map((n) => (
              <Slot key={n} name={n} />
            ))}
            <Sep w="w-[5.5px]" />
          </div>
        ))}
        <Combo w="w-[93px]"><span className="pl-[13px]">ISO-25</span></Combo>
        <Slot name="dimStyle" />
      </div>
    </div>
  );
}

function CommandLine() {
  return (
    <div className="flex h-[44px]">
      <div className="flex w-[18px] flex-col items-center bg-[#4c4c4c] pt-[12px]">
        <svg viewBox="0 0 8 8" className="h-[7px] w-[7px]" stroke="#fff" strokeWidth="1.800"><path d="M1 1l6 6M7 1L1 7" /></svg>
        <Icon name="wrench" className="mt-2 h-3 w-3" />
      </div>
      <div className="flex flex-1 flex-col">
        <div className="h-[25px] bg-[#c7c7c7] pl-0.5 font-['DejaVu_Sans_Mono','Noto_Sans_CJK_SC',monospace] text-[10px] leading-[12px] tracking-[-0.25px] whitespace-pre text-[#1c1c1c]">
          <div>指定第一个角点或 [倒角(C)/标高(E)/圆角(F)/厚度(T)/宽度(W)]:</div>
          <div>指定另一个角点或 [面积(A)/尺寸(D)/旋转(R)]:</div>
        </div>
        <div className="flex h-[17px] items-center bg-white pl-1 text-[9.7px] text-[#999] italic">
          <Icon name="prompt" className="h-[11px] w-[11px]" />
          <Dot className="ml-px" />
          <span className="pl-[7px]">键入命令</span>
        </div>
        <div className="h-0.5 bg-[#555]" />
      </div>
    </div>
  );
}

const toggles = ["infer", "snap", "grid", "ortho", "polar", "osnap", "osnap3d", "otrack", "ducs", "dyn", "lwt", "tpy", "qp", "sc", "am"];
const active = ["ortho", "osnap3d", "otrack", "lwt", "tpy"];

function StatusCell({ name, on }) {
  return (
    <div
      className={clsx(
        "flex w-[17.2px] shrink-0 items-center justify-center border-r border-[#868686]",
        on ? "bg-linear-to-b from-[#d6edf4] to-[#8ccbdd]" : "bg-linear-to-b from-[#c6c6c6] to-[#a9a9a9]",
      )}
    >
      <Icon name={name} className="h-[14px] w-[14px]" />
    </div>
  );
}

function StatusBar() {
  return (
    <div className="flex h-[17px] bg-linear-to-b from-[#747474] to-[#8d8d8d] text-[#1b1b1b]">
      <div className="flex w-[170px] items-center bg-linear-to-b from-[#858585] to-[#a5a5a5] pt-[3px] pl-[9px] font-['Liberation_Mono',monospace] text-[8.5px] tracking-[-0.43px] whitespace-pre">
        7087.7384, 2111.9461, 0.0000
      </div>
      {toggles.map((n) => (
        <StatusCell key={n} name={n} on={active.includes(n)} />
      ))}
      <div className="ml-auto flex w-[257px]">
        <div className="flex w-[23px] items-center justify-center border-r border-[#868686] bg-[#b4b4b4] text-[9.5px] font-medium">模型</div>
        <StatusCell name="layout" />
        <StatusCell name="qview" />
        <div className="w-[15px]" />
        <div className="flex w-[42px] items-center gap-0.5 border-r border-[#868686] bg-[#b4b4b4] pl-0.5 font-['Liberation_Mono',monospace] text-[9px]">
          <Icon name="anno" className="h-[12px] w-[12px]" />
          <span className="pt-0.5 tracking-[-0.4px]">1:1</span>
          <Caret />
        </div>
        <StatusCell name="annoSun" />
        <StatusCell name="annoOff" />
        <div className="w-[5px]" />
        <StatusCell name="gear" />
        <StatusCell name="lock" />
        <StatusCell name="layout" />
        <StatusCell name="qview" />
        <StatusCell name="table" />
        <StatusCell name="blank" />
      </div>
    </div>
  );
}

// red pen marks and the grey smear drawn above the whole window
function Markup() {
  return (
    <svg viewBox="0 0 1000 773" fill="none" className="pointer-events-none absolute inset-0 h-[773px] w-[1000px]">
      <path
        d="M739 708v-14c1-14 14-23 33-26 30-3 60 0 90-1s70 1 100 1h38v98c-25-1-45 0-60-3-18-8-35-10-60-12-35-4-70-3-95-3-16 0-24-6-31-15l-5-10z"
        fill="#c7c7c7"
      />
      <g stroke="#f00a0a" strokeWidth="3" strokeLinecap="round" strokeLinejoin="round">
        <ellipse cx="419" cy="335.500" rx="140" ry="137" />
        <ellipse cx="22" cy="169" rx="21.500" ry="18.500" />
        <path d="M214 236L30 173.500M46 171l-16 2.500 12 12M724 521L515 392M533 393.500l-18-1.500 10 15" />
        <path d="M764 134l4.500 16.500c2-5 5-9 10.500-12.500" />
      </g>
    </svg>
  );
}

export default function App() {
  return (
    <div className="relative flex h-[773px] w-[1000px] flex-col overflow-hidden bg-[#656565] font-['Open_Sans','Noto_Sans_CJK_SC',sans-serif] text-[#222]">
      <div className="flex">
        <div className="flex h-[34px] w-[32px] items-center border-r border-[#555] bg-linear-to-b from-[#b5b5b5] to-[#777] pb-1">
          <svg viewBox="0 0 24 28" className="h-[30px] w-[24px]" preserveAspectRatio="none">
            <path d="M3 24L8 3h7l7 19-6 2-1-5-6 1-1 5z" fill="#d3121b" />
            <path d="M8 3h3L8 17l-1 7-4 0z" fill="#f0505a" />
            <path d="M10 15l2-7 2 6z" fill="#8d1016" />
          </svg>
          <Caret className="h-[3px]! w-[5px]! text-[#333]" />
        </div>
        <div className="w-[968px]">
          <TitleBar />
          <MenuBar />
        </div>
      </div>
      <StandardRow />
      <PropertiesRow />
      <div className="ml-[22px] h-[3px] w-[953px] border-b border-[#444] bg-[#999]" />
      <div className="flex h-[586px]">
        <div className="flex w-[24px] items-start border-r-2 border-[#888] pl-px">
          <div className="-mt-[1.500px]">
            <VerticalBar items={drawTools} />
          </div>
        </div>
        <Canvas />
        <ScrollBar />
        <div className="flex w-[25px] flex-col items-start bg-[#5c5c5c] pl-[4px]">
          <div className="-mt-[1.500px]">
            <VerticalBar items={modifyTools} />
            <VerticalBar items={orderTools} />
          </div>
        </div>
      </div>
      <SheetTabs />
      <DimensionBar />
      <CommandLine />
      <StatusBar />
      <div className="h-1 bg-[linear-gradient(90deg,#2c6ea0,#9fd4ea_8%,#4fa1cc_20%,#a9dcee_32%,#3588bf_42%,#1f62a5_60%,#1c559a)]" />
      <Markup />
    </div>
  );
}
